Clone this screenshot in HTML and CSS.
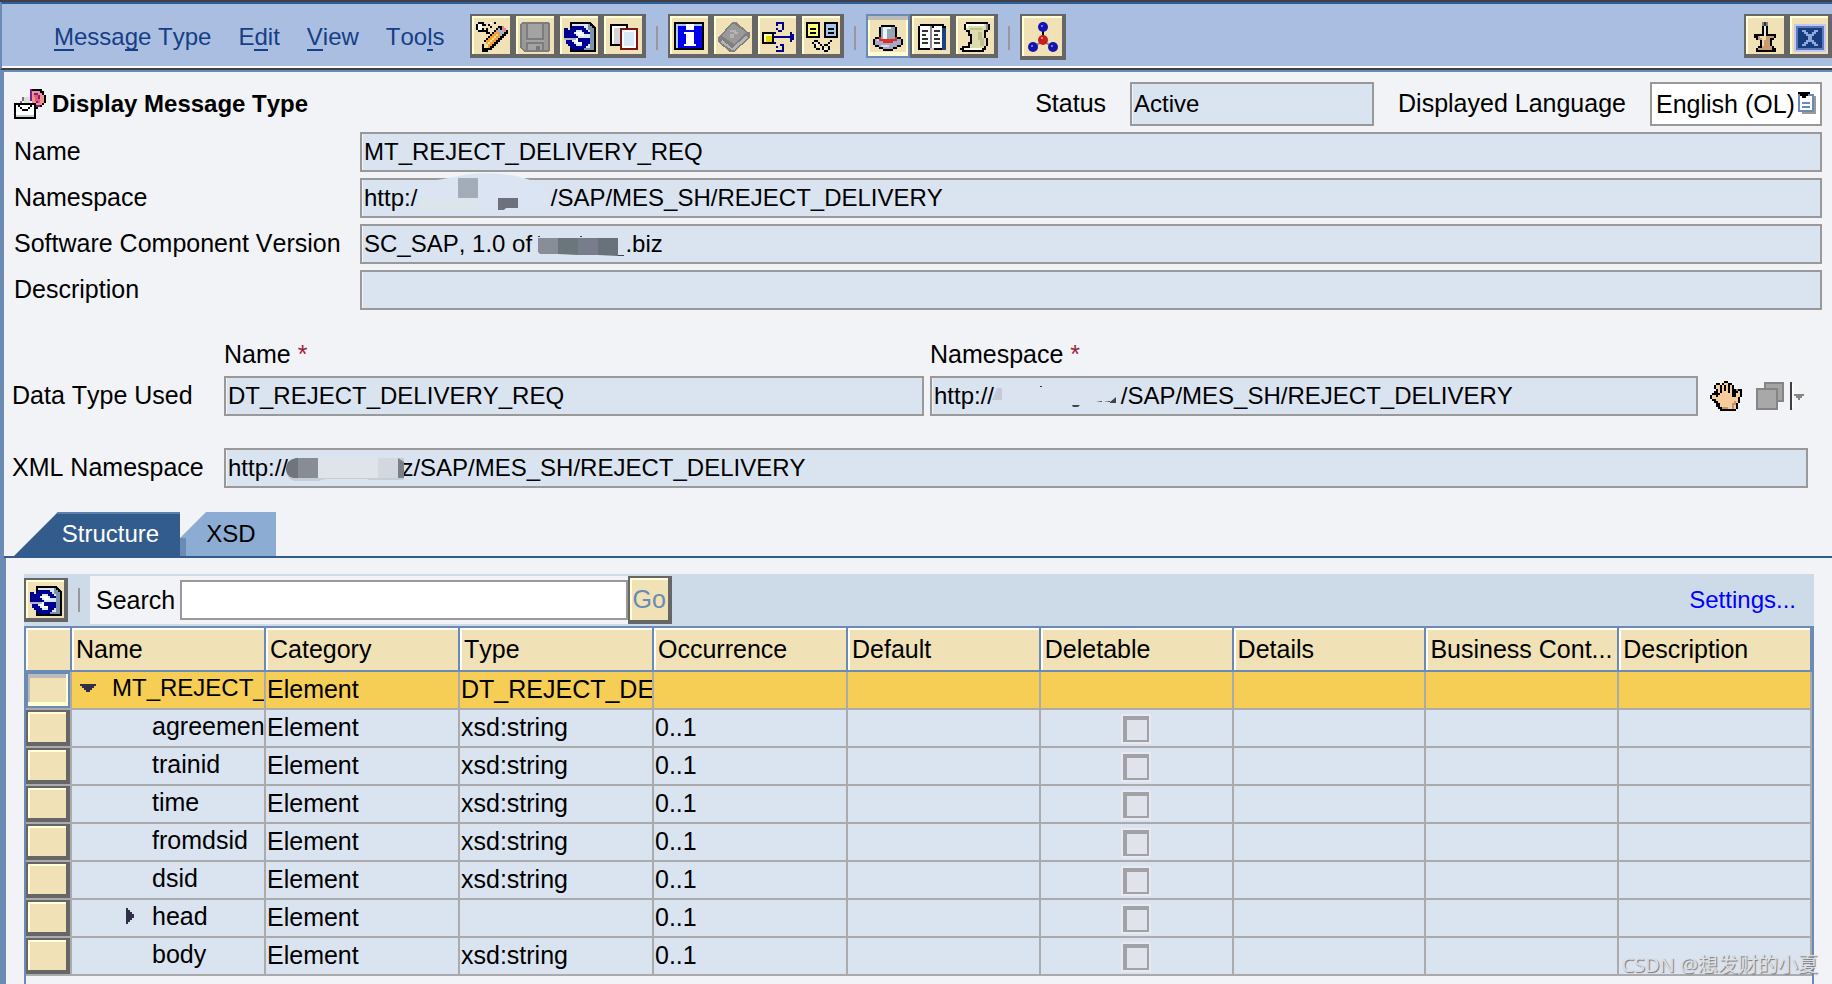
FILE: index.html
```html
<!DOCTYPE html>
<html lang="en">
  <head>
    <meta charset="UTF-8" />
    <meta name="viewport" content="width=device-width, initial-scale=1.0" />
    <title>Display Message Type</title>
    <link rel="stylesheet" href="styles.css">
  </head>
  <body>
    <!-- Shared icons -->
    <svg class="hidden">
      <symbol id="icon-refresh" viewBox="0 0 17 17">
        <path d="M4 2h10l3 3v12H4z" fill="#000" />
        <path d="M5 3h8v3h3v10H5z" fill="#d8e8f4" />
        <path d="M14 6h2v10h-6v-1h4z" fill="#7c93a8" />
        <path d="M13 3h1v1h1v1h1v1h-3z" fill="#7c93a8" />
        <path d="M5 4h6v1h1v1h1v1h1v1h-3V7h-1V6H7v1H6v1h1v1h1v1H1V5h2v1h1V5h1z" fill="#000090" />
        <path d="M8 10h6v3h-1v1h-1v1h-1v1H5v-1H4v-1H3v-1H2v-2h3v1h1v1h1v1h3v-1h-1v-1H8z" fill="#000090" />
        <path d="M7 7h3v1h1v1H8V8H7zM6 10h2v2h2v1H7v-1H6z" fill="#fff" />
        <path d="M1 10h6v1H1z" fill="#b8b8c4" />
      </symbol>
      <symbol id="icon-glasses" viewBox="0 0 10 6">
        <path d="M0 1h1V0h2v1h1v1h1v1H4V2H3V1H1v1H0zM1 2h1v2h2v1H2V4H1zM5 3h1V2h2v1h1v2H8v1H6V5H5zM6 3v2h2V3zM8 1h1V0h1v1H9v1H8z" fill="#000" fill-rule="evenodd" />
        <path d="M2 2h1v1H2zM6 4h1v1H6z" fill="#fff" />
      </symbol>
    </svg>

    <!-- Menu and toolbar -->
    <header class="topbar">
      <nav class="menu">
        <a href="#"><u>M</u>essa<u>g</u>e Type</a>
        <a href="#">E<u>d</u>it</a>
        <a href="#"><u>V</u>iew</a>
        <a href="#">Too<u>l</u>s</a>
      </nav>
      <div class="tools">
        <button class="tool" aria-label="Display or change">
          <svg viewBox="0 0 17 17">
            <path d="M4 17v-4h1v-2h1v-1h1V9h1V8h1V7h1V6h1V5h1V4h3v1h1v1h1v2h-1v1h-1v1h-1v1h-1v1h-1v1h-1v1h-1v1H9v1H7v1z" fill="#000" />
            <path d="M6 11h1v-1h1V9h1V8h1V7h1V6h1v1h1v1h1v1h-1v1h-1v1h-1v1h-1v1H9v1H8v1H7v-2H6z" fill="#f4a030" />
            <path d="M7 12h1v-1h1v-1h1V9h1V8h1v1h-1v1h-1v1H9v1H8v1H7z" fill="#ffe0a0" />
            <path d="M5 12h1v1h1v2H5z" fill="#f0dcb4" />
            <path d="M12 5h1v1h2v2h-1v1h-1V7h-1z" fill="#9fb2d8" />
            <path d="M14 4h1v1h1v2h-1V6h-1z" fill="#f08080" />
            <path d="M2 2h3v1h1v1H4V3H2zM1 3h1v3H1zM2 6h2v1H2zM4 5h1v1h1v1H4zM7 3h1v1H7zM6 5h1v3H6zM7 7h1v1H7zM8 4h1v1H8zM10 2h1v1h-1z" fill="#000" />
            <path d="M2 3h2v3H2zM8 2h1v1H8z" fill="#fff" />
          </svg>
        </button>
        <button class="tool" aria-label="Save" disabled>
          <svg viewBox="0 0 17 17">
            <path d="M2 2h13l1 1v13l-1 1H3l-2-2V3z" fill="#7d7d7d" />
            <path d="M2 3h2v13H3l-1-1zM13 3h2v13h-2z" fill="#999" />
            <path d="M5 3h7v7H5zM4 11h9v1H4zM5 13h7v3H5z" fill="#a3a3a3" />
            <path d="M9 14h2v2H9z" fill="#777" />
          </svg>
        </button>
        <button class="tool" aria-label="Refresh">
          <svg><use href="#icon-refresh" /></svg>
        </button>
        <button class="tool" aria-label="Copy">
          <svg viewBox="0 0 17 17">
            <path d="M2 3h9v11H2z" fill="#000" />
            <path d="M3 4h7v9H3z" fill="#fff" />
            <path d="M4 5h6v8H4z" fill="#d4d4d8" />
            <path d="M7 5h9v11H7z" fill="#7c1414" />
            <path d="M8 6h7v9H8z" fill="#fff" />
            <path d="M9 7h5v7H9z" fill="#d8e8f4" />
          </svg>
        </button>
        <span class="sep"></span>
        <button class="tool" aria-label="Information">
          <svg viewBox="0 0 17 17">
            <path d="M1 2h15v14H1z" fill="#000" />
            <path d="M2 3h13v12H2z" fill="#a6cdec" />
            <path d="M3 4h12v11H3z" fill="#0000ee" />
            <path d="M7 3h4v3H7zM6 7h5v6h1v1H6v-1h1V8H6z" fill="#fff" />
          </svg>
        </button>
        <button class="tool" aria-label="Documentation" disabled>
          <svg viewBox="0 0 17 17">
            <path d="M8 2h2l6 5h1v3l-8 7H7l-6-5v-2z" fill="#808080" />
            <path d="M8 3h1l6 4-6 6-6-4z" fill="#999" />
            <path d="M6 8h1V6h3v1h1v1H9v2H7V8h2V7H7v1zM2 12l1-1 5 4 7-6 1 1-7 6H8z" fill="#b4b4b4" />
          </svg>
        </button>
        <button class="tool" aria-label="Where used">
          <svg viewBox="0 0 17 17">
            <path d="M1 7h6v6H1z" fill="#000" />
            <path d="M2 8h4v4H2z" fill="#fffcc0" />
            <path d="M3 9h3v3H3z" fill="#e6d200" />
            <path d="M7 9h8V7h1v1h1v1h1v1h-1v1h-1v1h-1v-2H7zM7 7h1v1H7zM8 5h1v1H8zM8 2h4v1H9v1H8zM11 3h1v3h-1v1h-2V6h2zM7 12h1v1H7zM8 14h1v1H8zM8 16h4v1H8zM10 13h2v4h-1v-3h-1z" fill="#00008c" />
          </svg>
        </button>
        <button class="tool" aria-label="Compare">
          <svg viewBox="0 0 17 17">
            <path d="M1 2h7v8H1zM10 2h7v8h-7z" fill="#000" />
            <path d="M2 3h5v6H2z" fill="#ffff70" />
            <path d="M11 3h5v6h-5z" fill="#a2c8e8" />
            <path d="M3 5h3v1H3zM3 7h3v1H3zM12 5h3v1h-3zM12 7h3v1h-3z" fill="#000" />
            <use href="#icon-glasses" x="4" y="11" width="10" height="6" />
          </svg>
        </button>
        <span class="sep"></span>
        <button class="tool pressed" aria-label="Header">
          <svg viewBox="0 0 17 17">
            <path d="M4 4h1V3h7v1h1v5h2v1h1v3h-1v1h-2v1h-2v1H6v-1H4v-1H2v-1H1v-3h1V9h2z" fill="#000" />
            <path d="M5 4h7v6H5z" fill="#93a6ba" />
            <path d="M6 4h4v1H8v5H6z" fill="#eef4fa" />
            <path d="M2 10h13v3h-2v1h-2v1H6v-1H4v-1H2z" fill="#a6a8c8" />
            <path d="M3 10h1v1H3zM5 13h4v1H5z" fill="#d8daea" />
            <path d="M4 9h1v1h7V9h1v2h-2v1H6v-1H4z" fill="#e02c24" />
          </svg>
        </button>
        <button class="tool" aria-label="Book">
          <svg viewBox="0 0 17 17">
            <path d="M2 4h1V3h12v1h1v12H2z" fill="#000" />
            <path d="M14 5h2v11h-2z" fill="#1c4080" />
            <path d="M3 4h5v1h2V4h4v11H3z" fill="#fff" />
            <path d="M8 4h1v11H8z" fill="#888" />
            <path d="M4 6h3v1H4zM4 8h2v1H4zM4 10h3v1H4zM4 12h3v1H4zM10 6h3v1h-3zM10 8h2v1h-2zM10 10h3v1h-3zM10 12h3v1h-3z" fill="#333" />
            <path d="M8 15h2v1H8z" fill="#e4b8c8" />
          </svg>
        </button>
        <button class="tool" aria-label="Script">
          <svg viewBox="0 0 17 17">
            <path d="M4 2h11v1h1v3h-1v1h-1v3h1v4h-1v2h-1v1H2v-1H1v-1h1v-1h3v-2h1V9H5V7H4V6H3V3h1z" fill="#000" />
            <path d="M4 3h10v3h-1v4h1v4h-1v1H6v-2h1V8H6V6H4z" fill="#dcdcae" />
            <path d="M4 3h9v1H5v1H4zM3 15h9v1H3z" fill="#fffff0" />
            <path d="M14 3h1v3h-1z" fill="#8c8c8c" />
            <path d="M10 7h2v3h1v4h-2v-3h-1zM6 5h6v1H6z" fill="#c0c090" />
          </svg>
        </button>
        <span class="sep"></span>
        <button class="tool wide" aria-label="Where-used tree">
          <svg viewBox="0 0 17 17" class="smooth">
            <path d="M9 5v6L4 14M9 11l5 3" fill="none" stroke="#889" />
            <path d="M9 6v3" stroke="#000" />
            <circle cx="9" cy="4" r="2.5" fill="#1414b0" />
            <circle cx="4" cy="14" r="2.5" fill="#1414b0" />
            <circle cx="14" cy="14" r="2.5" fill="#1414b0" />
            <circle cx="9" cy="10.5" r="2.5" fill="#c81e1e" />
            <path d="M8 3h1v1H8zM3 13h1v1H3zM13 13h1v1h-1z" fill="#6878e8" />
            <path d="M8 9h1v1H8z" fill="#f08080" />
          </svg>
        </button>
      </div>
      <div class="window-tools">
        <button class="tool" aria-label="Pin">
          <svg viewBox="0 0 17 17">
            <path d="M7 4h3v4h4v2h-1v1h-1v3h1v1h1v2H4v-2h1v-1h1v-3H4v-1H3V8h4z" fill="#000" />
            <path d="M7 2h3v2H7z" fill="#808080" />
            <path d="M8 2h1v2H8z" fill="#333" />
            <path d="M8 4h1v5H8z" fill="#e8e8e8" />
            <path d="M5 9h8v1h-2v4h1v2H5v-1h2v-4H5z" fill="#c89c6c" />
            <path d="M6 9h3v2H8v3H7v-4H6z" fill="#f0d8b4" />
          </svg>
        </button>
        <button class="tool" aria-label="Close">
          <svg viewBox="0 0 17 17">
            <path d="M1 3h16v14H1z" fill="#c6c6f6" />
            <path d="M2 4h14v12H2z" fill="#5a7cbc" />
            <path d="M3 5h12v10H3z" fill="#173c80" />
            <path d="M5 6h2v1h1v1h2V7h1V6h2v1h-1v1h-1v1h-1v2h1v1h1v1h1v1h-2v-1h-1v-1H8v1H7v1H5v-1h1v-1h1v-1h1V9H7V8H6V7H5z" fill="#90a8d8" />
          </svg>
        </button>
      </div>
    </header>

    <main class="page">
      <section class="details">
        <div class="title-row">
          <svg class="title-icon" viewBox="0 0 16 15">
            <path d="M4 6h1V4h1V3h3V2H8v1H6v1H4v2H3v1h1z" fill="#777" />
            <path d="M5 4h3v3H5z" fill="#ddd" />
            <path d="M9 0h5v1h1v2h1v4h-1v1h-1v1h-2v1h-1V9H9z" fill="#000" />
            <path d="M9 1h4v1h1v1h1v4h-1v1h-2v1h-1V7H9z" fill="#f09090" />
            <path d="M10 3h3v4h-2z" fill="#e85c68" />
            <path d="M8 0h1v6H8zM10 2h2v1h1v2h-1v2h-1v1h2v1h-2V6h1V3h-2z" fill="#7c1c8c" />
            <path d="M0 7h11v8H0z" fill="#000" />
            <path d="M1 8h9v6H1z" fill="#fff" />
            <path d="M2 8h1v1H2zM3 9h1v1H3zM4 10h3v1H4zM7 9h1v1H7zM8 8h1v1H8z" fill="#000" />
            <path d="M1 13h9v1H1z" fill="#ccc" />
          </svg>
          <h1>Display Message Type</h1>
          <label for="status" class="status-label">Status</label>
          <input type="text" id="status" class="field status" value="Active" readonly />
          <label for="language" class="language-label">Displayed Language</label>
          <div class="language">
            <select id="language">
              <option>English (OL)</option>
            </select>
            <svg class="language-icon" viewBox="0 0 9 11">
              <path d="M2 2h7v9H2z" fill="#9a9a9a" />
              <path d="M0 1h8v9H0z" fill="#6b8bb4" />
              <path d="M1 2h6v7H1z" fill="#fff" />
              <path d="M2 5h4v1H2zM2 7h4v1H2z" fill="#6b8bb4" />
              <path d="M0 0h6v1H5v1H4v1H2V2H1V1H0z" fill="#000" />
            </svg>
          </div>
        </div>

        <div class="form-row">
          <label for="name">Name</label>
          <input type="text" id="name" class="field" value="MT_REJECT_DELIVERY_REQ" readonly />
        </div>
        <div class="form-row">
          <label for="namespace">Namespace</label>
          <div class="masked">
            <input type="text" id="namespace" class="field" value="http:/                    /SAP/MES_SH/REJECT_DELIVERY" readonly />
            <svg class="mask mask-namespace" viewBox="0 0 134 40">
              <path d="M0 9Q20 6 36 3Q66-4 98 2Q124 8 132 18V34H0z" fill="#dae4f2" />
              <path d="M0 24h60v12H0z" fill="#dce4ec" />
              <path d="M40 4h20v20H40z" fill="#a3acb9" />
              <path d="M80 24h20v10H88l-2 2h-6z" fill="#6d717e" />
            </svg>
          </div>
        </div>
        <div class="form-row">
          <label for="component">Software Component Version</label>
          <div class="masked">
            <input type="text" id="component" class="field" value="SC_SAP, 1.0 of              .biz" readonly />
            <svg class="mask mask-component" viewBox="0 0 86 20">
              <path d="M0 2h20v16H2l-2-2z" fill="#898d98" />
              <path d="M20 2h20v17l-20-1z" fill="#6a767c" />
              <path d="M40 2h20v17H40z" fill="#787c8b" />
              <path d="M60 2h20v18l-20-1z" fill="#69717a" />
              <path d="M80 19h6v1h-6zM0 0h2v1H0zM42 0h2v1h-2z" fill="#444" />
            </svg>
          </div>
        </div>
        <div class="form-row">
          <label for="description">Description</label>
          <input type="text" id="description" class="field" readonly />
        </div>

        <div class="type-grid">
          <label for="type-name" class="type-head type-head-name">Name <span class="required">*</span></label>
          <label for="type-namespace" class="type-head">Namespace <span class="required">*</span></label>
          <span class="type-label">Data Type Used</span>
          <input type="text" id="type-name" class="field" aria-label="Data type name" value="DT_REJECT_DELIVERY_REQ" readonly />
          <div class="masked">
            <input type="text" id="type-namespace" class="field" value="http://                   /SAP/MES_SH/REJECT_DELIVERY" readonly />
            <svg class="mask mask-type" viewBox="0 0 126 24">
              <path d="M5 2h5v12H0z" fill="#c6cad6" />
              <path d="M10 1h112l-6 17H10z" fill="#dbe3f1" />
              <path d="M48 0h2v1h-2z" fill="#333" />
              <path d="M80 19h8l-2 2h-5zM104 16l6-1v1zM112 16l6-1v1zM118 16l6-5v6h-6z" fill="#444" />
            </svg>
          </div>
          <div class="type-tools">
            <button class="plain" aria-label="Select">
              <svg class="hand" viewBox="0 0 16 15">
                <path d="M2 2h1V1h2v1h1V1h1V0h2v1h2v1h1v2h1v1h1V4h2v4h-1v3h-1v3h-1v1H5v-1H4v-1H3v-2H2v-1H1V9H0V7h1V6h1V5h1V4H2z" fill="#000" />
                <path d="M3 2h2v3h1V2h1V1h2v4h1V2h1v6h2V6h1V5h1v3h-1v3h-1v3H6v-1H5v-2H4v-1H3V9H1V7h2v1h1V7h1V6H4V4H3z" fill="#f6cc9c" />
                <path d="M12 10h1v2h-1v2h-1v-3h1zM6 13h3v1H6z" fill="#c49464" />
                <path d="M7 2h1v3H7zM9 2h1v4H9zM5 3h1v3H5z" fill="#000" />
                <path d="M13 4h1v1h-1z" fill="#7890b0" />
              </svg>
            </button>
            <button class="plain" aria-label="Copy type" disabled>
              <svg class="stack" viewBox="0 0 24 14">
                <path d="M4 0h10v10H4z" fill="#858585" />
                <path d="M5 1h8v8H5z" fill="#a4a4a4" />
                <path d="M0 3h11v11H0z" fill="#858585" />
                <path d="M1 4h9v9H1z" fill="#a8a8a8" />
                <path d="M17 0h1v14h-1z" fill="#404040" />
                <path d="M18 1h1v12h-1z" fill="#fff" />
                <path d="M19 6h5v1h-1v1h-1v1h-1V8h-1V7h-1z" fill="#858585" />
              </svg>
            </button>
          </div>
        </div>

        <div class="xml-row">
          <label for="xml-namespace">XML Namespace</label>
          <div class="masked">
            <input type="text" id="xml-namespace" class="field" value="http://                 z/SAP/MES_SH/REJECT_DELIVERY" readonly />
            <svg class="mask mask-xml" viewBox="0 0 118 24">
              <path d="M10 0h108v22H84l-4-1H40l-8 2H8Q0 20 0 11Q0 2 10 0z" fill="#c9ccd2" />
              <path d="M12 0v20H7Q0 18 0 11Q0 2 10 0z" fill="#70747e" />
              <path d="M12 0h20v20H12z" fill="#878d95" />
              <path d="M32 0h60v20H32z" fill="#dfe3ea" />
              <path d="M92 0h20v20H92z" fill="#d2d8df" />
              <path d="M112 0l6 4v16h-6z" fill="#7a808a" />
            </svg>
          </div>
        </div>
      </section>

      <!-- Tabs -->
      <div class="tabs" role="tablist">
        <button class="tab active" role="tab" aria-selected="true">Structure</button>
        <button class="tab" role="tab" aria-selected="false">XSD</button>
      </div>

      <section class="panel">
        <div class="panel-bar">
          <button class="tool" aria-label="Refresh table">
            <svg><use href="#icon-refresh" /></svg>
          </button>
          <span class="sep"></span>
          <form class="search">
            <label for="search">Search</label>
            <input type="text" id="search" />
            <button type="button" class="go" disabled>Go</button>
          </form>
          <a href="#" class="settings">Settings...</a>
        </div>

        <div class="table-wrap">
          <table>
            <thead>
              <tr>
                <th class="pick"></th>
                <th class="main">Name</th>
                <th class="main">Category</th>
                <th class="main">Type</th>
                <th class="main">Occurrence</th>
                <th>Default</th>
                <th>Deletable</th>
                <th>Details</th>
                <th>Business Cont...</th>
                <th>Description</th>
              </tr>
            </thead>
            <tbody>
              <tr class="selected">
                <td class="pick"><button class="row-btn" aria-label="Select row 1"></button></td>
                <td><div class="node root"><svg class="open" viewBox="0 0 8 4"><path d="M0 0h8v1H7v1H6v1H5v1H3V3H2V2H1V1H0z" fill="#2f2f48" /></svg>MT_REJECT_</div></td>
                <td>Element</td>
                <td>DT_REJECT_DEL</td>
                <td></td><td></td><td></td><td></td><td></td><td></td>
              </tr>
              <tr>
                <td class="pick"><button class="row-btn" aria-label="Select row 2"></button></td>
                <td><div class="node">agreemen</div></td>
                <td>Element</td>
                <td>xsd:string</td>
                <td>0..1</td>
                <td></td>
                <td class="check"><input type="checkbox" aria-label="agreement deletable" disabled /></td>
                <td></td><td></td><td></td>
              </tr>
              <tr>
                <td class="pick"><button class="row-btn" aria-label="Select row 3"></button></td>
                <td><div class="node">trainid</div></td>
                <td>Element</td>
                <td>xsd:string</td>
                <td>0..1</td>
                <td></td>
                <td class="check"><input type="checkbox" aria-label="trainid deletable" disabled /></td>
                <td></td><td></td><td></td>
              </tr>
              <tr>
                <td class="pick"><button class="row-btn" aria-label="Select row 4"></button></td>
                <td><div class="node">time</div></td>
                <td>Element</td>
                <td>xsd:string</td>
                <td>0..1</td>
                <td></td>
                <td class="check"><input type="checkbox" aria-label="time deletable" disabled /></td>
                <td></td><td></td><td></td>
              </tr>
              <tr>
                <td class="pick"><button class="row-btn" aria-label="Select row 5"></button></td>
                <td><div class="node">fromdsid</div></td>
                <td>Element</td>
                <td>xsd:string</td>
                <td>0..1</td>
                <td></td>
                <td class="check"><input type="checkbox" aria-label="fromdsid deletable" disabled /></td>
                <td></td><td></td><td></td>
              </tr>
              <tr>
                <td class="pick"><button class="row-btn" aria-label="Select row 6"></button></td>
                <td><div class="node">dsid</div></td>
                <td>Element</td>
                <td>xsd:string</td>
                <td>0..1</td>
                <td></td>
                <td class="check"><input type="checkbox" aria-label="dsid deletable" disabled /></td>
                <td></td><td></td><td></td>
              </tr>
              <tr>
                <td class="pick"><button class="row-btn" aria-label="Select row 7"></button></td>
                <td><div class="node branch"><svg class="closed" viewBox="0 0 4 8"><path d="M0 0h1v1h1v1h1v1h1v2H3v1H2v1H1v1H0z" fill="#2f2f48" /></svg>head</div></td>
                <td>Element</td>
                <td></td>
                <td>0..1</td>
                <td></td>
                <td class="check"><input type="checkbox" aria-label="head deletable" disabled /></td>
                <td></td><td></td><td></td>
              </tr>
              <tr>
                <td class="pick"><button class="row-btn" aria-label="Select row 8"></button></td>
                <td><div class="node">body</div></td>
                <td>Element</td>
                <td>xsd:string</td>
                <td>0..1</td>
                <td></td>
                <td class="check"><input type="checkbox" aria-label="body deletable" disabled /></td>
                <td></td><td></td><td></td>
              </tr>
            </tbody>
          </table>
        </div>
      </section>
    </main>
    <div class="watermark">CSDN @想发财的小夏</div>
  </body>
</html>
```
FILE: styles.css
```css
* {
  box-sizing: border-box;
}

body {
  margin: 0;
  min-height: 100vh;
  display: flex;
  flex-direction: column;
  position: relative;
  font-family: "Liberation Sans", Arial, sans-serif;
  font-size: 25px;
  line-height: 28px;
  font-kerning: none;
  color: #000;
  background: #f2f3f7;
}

button,
input,
select {
  font: inherit;
  font-kerning: none;
  color: inherit;
  margin: 0;
  border-radius: 0;
}

svg {
  display: block;
  shape-rendering: crispEdges;
}

.smooth {
  shape-rendering: auto;
}

.hidden {
  position: absolute;
  width: 0;
  height: 0;
}

/* Top bar */
.topbar {
  display: flex;
  align-items: flex-start;
  height: 70px;
  padding-top: 10px;
  background: #a9bee0;
  border-top: 4px solid #325c94;
  border-left: 2px solid #6b8bb4;
  border-bottom: 2px solid #404040;
  box-shadow: inset 0 -2px #fff;
  position: relative;
}

.topbar::before {
  content: "";
  position: absolute;
  top: -4px;
  left: -2px;
  right: 0;
  height: 2px;
  background: #404048;
}

.menu {
  display: flex;
  gap: 27px;
  width: 468px;
  padding-left: 52px;
  padding-top: 9px;
  font-size: 24px;
}

.menu a {
  color: #173f86;
  text-decoration: none;
}

.menu u {
  text-decoration: none;
  border-bottom: 2px solid #173f86;
  display: inline-block;
  line-height: 24px;
}

.tools,
.window-tools {
  display: flex;
}

.window-tools {
  margin-left: auto;
}

.tool {
  display: flex;
  align-items: center;
  justify-content: center;
  flex: none;
  width: 44px;
  height: 44px;
  padding: 0;
  background: #f0e2b6;
  border: solid #666;
  border-width: 2px 4px 4px 2px;
  box-shadow: inset 2px 2px #ffffd8;
}

.tool svg {
  width: 34px;
  height: 34px;
}

.tool.pressed {
  border: 2px solid #6b8bb4;
  box-shadow: inset 0 4px #bbb, inset -2px -4px #ffffd8, inset 2px 0 #ffffd8;
}

.tool.wide {
  width: 46px;
  height: 46px;
}

.sep {
  width: 2px;
  height: 24px;
  margin: 12px 10px 0;
  background: #98989c;
}

/* Details */
.page {
  flex: 1;
  display: flex;
  flex-direction: column;
  border-top: 2px solid #6b8bb4;
  border-left: 4px solid #6b8bb4;
}

.details {
  padding: 10px 10px 24px 10px;
}

.details label,
.type-label {
  padding-bottom: 2px;
}

.title-row {
  display: flex;
  align-items: center;
  margin-bottom: 6px;
}

.title-icon {
  width: 32px;
  height: 30px;
}

h1 {
  margin: 0 auto 0 6px;
  font-size: 24px;
  line-height: 28px;
}

.field {
  display: block;
  width: 100%;
  height: 40px;
  padding: 0 2px 1px;
  font-size: 24px;
  background: #dae4f0;
  border: 2px solid #999;
  outline: none;
  box-shadow: inset 1px 0 #f2f3f7;
}

.field.status {
  width: 244px;
  height: 44px;
}

.status-label {
  margin-right: 24px;
}

.language-label {
  margin: 0 24px;
}

.language {
  position: relative;
  width: 172px;
}

.language select {
  width: 100%;
  height: 44px;
  padding: 0 4px;
  background: #fff;
  border: 2px solid #999;
  appearance: none;
}

.language-icon {
  position: absolute;
  right: 6px;
  top: 10px;
  width: 18px;
  height: 22px;
  pointer-events: none;
}

.form-row {
  display: grid;
  grid-template-columns: 346px 1fr;
  align-items: center;
  margin-bottom: 6px;
}

.masked {
  position: relative;
}

.mask {
  position: absolute;
  shape-rendering: auto;
  overflow: visible;
}

.mask-namespace {
  left: 58px;
  top: -4px;
  width: 134px;
  height: 40px;
}

.mask-component {
  left: 178px;
  top: 12px;
  width: 86px;
  height: 20px;
}

.mask-type {
  left: 62px;
  top: 10px;
  width: 126px;
  height: 24px;
}

.mask-xml {
  left: 62px;
  top: 10px;
  width: 118px;
  height: 24px;
}

.type-grid {
  display: grid;
  grid-template-columns: 206px 700fr 768fr 118px;
  column-gap: 6px;
  row-gap: 6px;
  align-items: center;
  padding-top: 24px;
}

.type-head-name {
  grid-column: 2;
}

.type-label {
  grid-column: 1;
}

.required {
  color: #a01c3c;
}

.type-grid,
.xml-row {
  margin-left: -2px;
}

.type-tools {
  display: flex;
  gap: 14px;
  padding-left: 6px;
}

.plain {
  padding: 0;
  border: 0;
  background: none;
}

.hand {
  width: 32px;
  height: 30px;
}

.stack {
  width: 48px;
  height: 28px;
}

.xml-row {
  display: grid;
  grid-template-columns: 212px 1fr;
  align-items: center;
  margin-top: 32px;
  margin-right: 14px;
}

/* Tabs */
.tabs {
  display: flex;
  padding-left: 10px;
  border-bottom: 2px solid #325c8c;
}

.tab {
  width: 96px;
  height: 44px;
  padding: 0 0 0 6px;
  border: 0;
  font-size: 24px;
  background: linear-gradient(#6b8bb4, #6b8bb4) 0 100% / 6px 18px no-repeat #8dacd4;
  clip-path: polygon(0 26px, 26px 0, 100% 0, 100% 100%, 0 100%);
}

.tab.active {
  width: 166px;
  padding: 0 0 0 27px;
  color: #fff;
  background: #325c8c;
  box-shadow: inset 0 2px #5c80ac;
  clip-path: polygon(0 100%, 44px 0, 100% 0, 100% 100%);
}

/* Table panel */
.panel {
  flex: 1;
  display: flex;
  flex-direction: column;
  padding: 16px 18px 0 18px;
  border-left: 2px solid #6b8bb4;
}

.panel-bar {
  display: flex;
  align-items: center;
  height: 52px;
  background: #cddbe8;
}

.panel-bar .sep {
  margin: 0 10px;
}

.search {
  display: flex;
  align-items: center;
  height: 48px;
  padding-left: 6px;
  background: #f2f3f7;
}

.search label {
  margin-right: 5px;
}

.search input {
  width: 448px;
  height: 40px;
  padding: 0 4px;
  border: 2px solid #999;
  background: #fff;
}

.go {
  width: 44px;
  height: 48px;
  padding: 0;
  color: #6b8bb4;
  background: #f0e2b6;
  border: solid #666;
  border-width: 2px 4px 4px 2px;
  box-shadow: inset 2px 2px #ffffd8;
}

.settings {
  margin-left: auto;
  margin-right: 18px;
  font-size: 24px;
  color: #0000ff;
  text-decoration: none;
}

.table-wrap {
  flex: 1;
  border: 2px solid #6b8bb4;
  border-bottom: 0;
}

table {
  width: 100%;
  table-layout: fixed;
  border-collapse: separate;
  border-spacing: 0;
}

th,
td {
  padding: 0 0 0 1px;
  overflow: hidden;
  white-space: nowrap;
  text-align: left;
  font-weight: normal;
}

th {
  height: 44px;
  padding-left: 4px;
  background: #f0e2b6;
  border-right: 2px solid #6b8bb4;
  border-bottom: 2px solid #6b8bb4;
  box-shadow: inset 2px 2px #fff;
}

td {
  height: 38px;
  padding-bottom: 2px;
  background: #dae4f0;
  border-right: 2px solid #ababad;
  border-bottom: 2px solid #ababad;
}

.main {
  width: 194px;
}

.selected td {
  background: #f6cd55;
}

.pick {
  width: 46px;
  padding: 0;
}

td.pick,
.selected td.pick {
  background: #dae4f0;
}

.row-btn {
  display: block;
  width: 44px;
  height: 36px;
  padding: 0;
  background: #f0e2b6;
  border: solid #666;
  border-width: 2px 4px 4px 2px;
  box-shadow: inset 2px 2px #ffffd8;
}

.selected .row-btn {
  border: 2px solid #6b8bb4;
  box-shadow: inset -2px -4px #ffffd8, inset 2px 4px #bbb;
}

.node {
  display: flex;
  align-items: center;
  padding-left: 79px;
  padding-bottom: 2px;
}

.node.root {
  padding-left: 7px;
  font-size: 24px;
}

.node.branch {
  padding-left: 53px;
}

.open {
  flex: none;
  width: 16px;
  height: 8px;
  margin-right: 16px;
}

.closed {
  flex: none;
  width: 8px;
  height: 16px;
  margin-right: 18px;
}

.check {
  padding: 0;
}

.check input {
  display: block;
  width: 26px;
  height: 26px;
  margin: 2px auto 0;
  appearance: none;
  background: #e0e3ec;
  border: solid #a0a2a6;
  border-width: 4px 2px 2px 4px;
  box-shadow: 0 0 0 2px #eae8f0;
}

.watermark {
  position: absolute;
  right: 14px;
  bottom: 5px;
  font-family: "Noto Sans", "Noto Sans CJK SC", sans-serif;
  font-size: 20px;
  color: #dcdfe4;
  text-shadow: 1px 1px 1px #777;
}
```
